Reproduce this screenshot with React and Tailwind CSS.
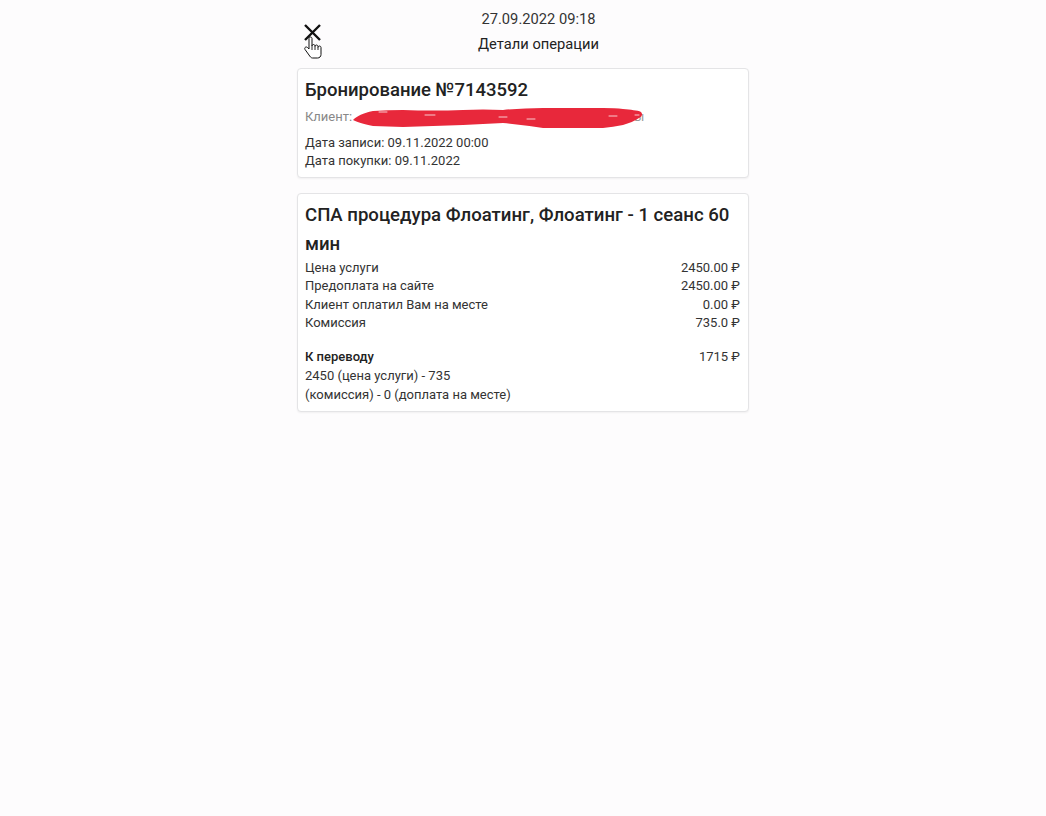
import React from "react";

function CloseIcon() {
  return (
    <svg width="19" height="19" viewBox="0 0 19 19" className="block">
      <path d="M2 2 L17 17 M17 2 L2 17" stroke="#111" strokeWidth="2.4" strokeLinecap="butt" fill="none" />
    </svg>
  );
}

function HandCursor() {
  return (
    <svg width="18" height="23" viewBox="0 0 18 23" className="block">
      <path
        d="M6.5 1 C5.7 1 5 1.7 5 2.5 V13 L3.5 11.5 C2.8 10.8 1.7 10.8 1.1 11.5 C0.6 12.1 0.6 13 1.1 13.6 L5 19 C6 20.5 7 22 8.5 22 H13.5 C15.5 22 17 20.5 17 18.5 V11.5 C17 10.7 16.3 10 15.5 10 C14.7 10 14 10.7 14 11.5 V10.5 C14 9.7 13.3 9 12.5 9 C11.7 9 11 9.7 11 10.5 V10 C11 9.2 10.3 8.5 9.5 8.5 C8.7 8.5 8 9.2 8 10 V2.5 C8 1.7 7.3 1 6.5 1 Z"
        fill="#fff"
        stroke="#111"
        strokeWidth="1"
        strokeLinejoin="round"
      />
      <path d="M8 10 V14 M11 10.5 V14 M14 11.5 V14" stroke="#111" strokeWidth="0.9" fill="none" />
    </svg>
  );
}

function Scribble() {
  return (
    <svg width="300" height="24" viewBox="0 0 300 24" className="block">
      <path
        d="M4 14 C8 10 14 7 24 5 Q40 4 54 4 Q84 5 114 4 Q134 3 154 4 Q174 2 194 2 L254 2 Q266 2 274 3 C282 4 288 4 292 6 C294 8 293 11 290 12 C286 15 280 17 274 19 Q264 21 254 22 L194 22 Q174 19 154 17 Q134 18 114 19 Q84 20 54 21 L24 20 C14 18 8 16 4 14 Z"
        fill="#e8283b"
      />
      <g stroke="#ffffff" strokeWidth="0.9" strokeLinecap="round" opacity="0.85">
        <path d="M30 6 L38 6" />
        <path d="M76 9 L86 9" />
        <path d="M150 11 L158 11" />
        <path d="M178 13 L186 13" />
        <path d="M260 10 L268 10" />
        <path d="M286 9 L290 9" />
      </g>
    </svg>
  );
}

function Row({ label, value }) {
  return (
    <div className="flex justify-between leading-[18.3px]">
      <span>{label}</span>
      <span>{value}</span>
    </div>
  );
}

export default function App() {
  return (
    <div
      className="min-h-screen bg-[#fdfcfd] text-[#333] flex justify-center"
      style={{ fontFamily: "Roboto, 'Noto Sans', 'Liberation Sans', sans-serif" }}
    >
      <div className="w-[452px] pt-[8px]">
        <div className="flex items-start mb-[13px]">
          <div className="w-[31px] pl-[6px] pt-[15px] relative">
            <CloseIcon />
            <div className="absolute left-[7px] top-[28px]">
              <HandCursor />
            </div>
          </div>
          <div className="flex-1 text-center">
            <div className="text-[14.7px] leading-[22px] text-[#333]">27.09.2022 09:18</div>
            <div className="mt-[3px] text-[14.7px] leading-[22px] text-[#222]">Детали операции</div>
          </div>
        </div>

        <div className="bg-white border border-[#e4e4e6] rounded-[4px] shadow-[0_1px_2px_rgba(0,0,0,0.05)] px-[7px] pt-[7px] pb-[7px]">
          <div className="text-[18.5px] leading-[29px] font-medium text-[#222]">Бронирование №7143592</div>
          <div className="mt-[2px] flex items-center text-[13px] leading-[20px] text-[#888]">
            <span>Клиент:</span>
            <span className="relative inline-block w-[292px] h-[20px]">
              <span className="absolute left-[282px] top-0 text-[#999]">ы</span>
              <span className="absolute -left-[3px] -top-[1px]">
                <Scribble />
              </span>
            </span>
          </div>
          <div className="mt-[7px] text-[13px] leading-[18px] text-[#333]">
            <div>Дата записи: 09.11.2022 00:00</div>
            <div>Дата покупки: 09.11.2022</div>
          </div>
        </div>

        <div className="mt-[15px] bg-white border border-[#e4e4e6] rounded-[4px] shadow-[0_1px_2px_rgba(0,0,0,0.05)] px-[7px] pt-[7px] pb-[7px]">
          <div className="text-[18.6px] leading-[29px] font-medium text-[#222]">
            СПА процедура Флоатинг, Флоатинг - 1 сеанс 60 мин
          </div>
          <div className="text-[13px] text-[#333] pr-[1px]">
            <Row label="Цена услуги" value="2450.00 ₽" />
            <Row label="Предоплата на сайте" value="2450.00 ₽" />
            <Row label="Клиент оплатил Вам на месте" value="0.00 ₽" />
            <Row label="Комиссия" value="735.0 ₽" />
            <div className="mt-[16px] flex justify-between leading-[18.3px]">
              <div className="w-[210px]">
                <div className="font-medium text-[#222]">К переводу</div>
                <div className="mt-[1px]">2450 (цена услуги) - 735 (комиссия) - 0 (доплата на месте)</div>
              </div>
              <span>1715 ₽</span>
            </div>
          </div>
        </div>
      </div>
    </div>
  );
}
